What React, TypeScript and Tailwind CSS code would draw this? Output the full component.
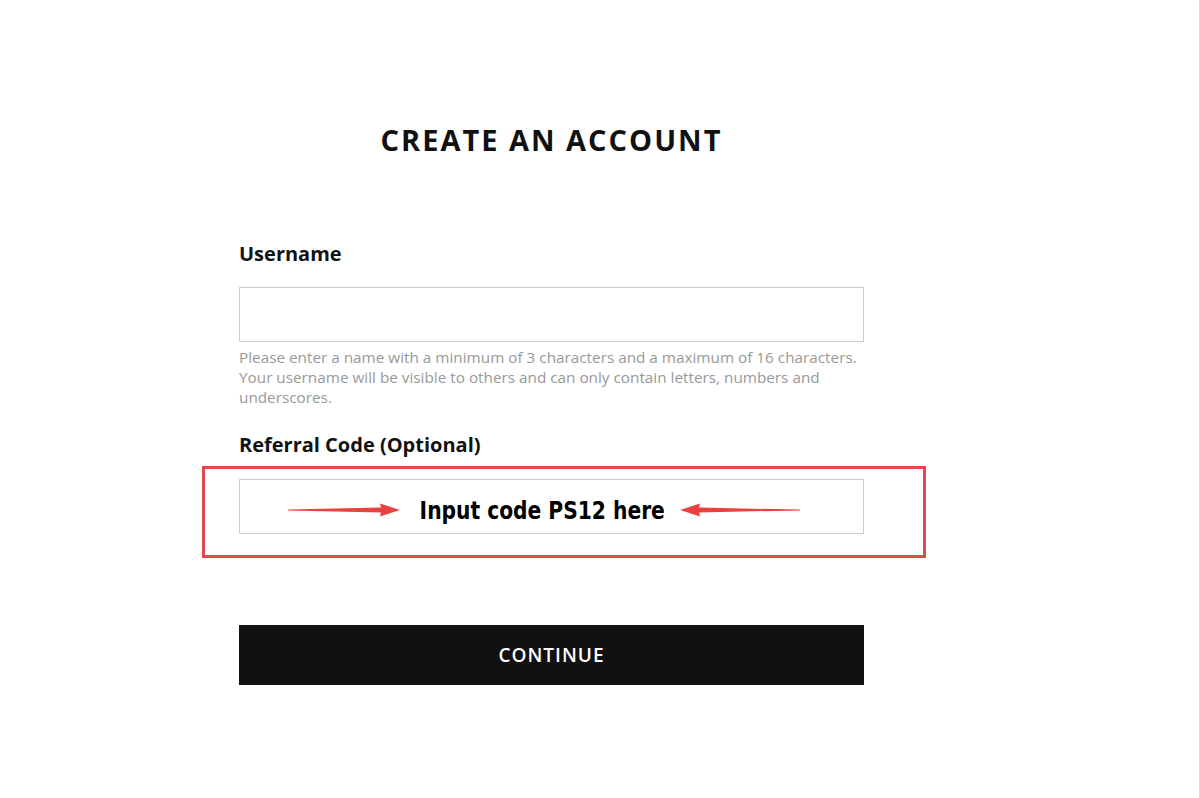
import React from 'react';

// Tapered red arrow used in the annotation
function Arrow({ dir, width }: { dir: 'right' | 'left'; width: number }) {
  const h = width - 20;
  return (
    <svg width={width} height="14" viewBox={`0 0 ${width} 14`} className={dir === 'left' ? 'rotate-180' : ''}>
      <path d={`M0 6.6 L${h + 1} 4.6 L${h} 0.5 L${width} 7 L${h} 13.5 L${h + 1} 9.4 L0 7.4 Z`} fill="#e8413f" />
    </svg>
  );
}

export default function App() {
  return (
    <div className="min-h-[798px] w-[1200px] bg-white border-r border-[#d9d9d9] font-['Open_Sans',sans-serif]">
      <div className="pl-[239px] pt-[120px]">
        <div className="w-[625px] flex flex-col">
          <h1 className="text-center text-[29px] leading-[40px] font-bold tracking-[2px] text-[#111]">
            CREATE AN ACCOUNT
          </h1>

          <label className="mt-[81px] text-[20px] leading-[26px] font-bold text-[#111]">Username</label>
          <input className="mt-[20px] h-[55px] border border-[#cccccc] outline-none px-3" />
          <p className="mt-[5px] text-[15.3px] leading-[20px] text-[#999999]">
            Please enter a name with a minimum of 3 characters and a maximum of 16 characters. Your username will be visible to others and can only contain letters, numbers and underscores.
          </p>

          <label className="mt-[25px] text-[20px] leading-[26px] font-bold text-[#111]">Referral Code (Optional)</label>
          <div className="mt-[8px] -ml-[37px] -mr-[62px] border-[3px] border-[#e04a4a] pt-[10px] pb-[21px] pl-[34px] pr-[59px]">
            <div className="h-[55px] border border-[#cccccc] flex items-center">
              <div className="ml-[48px] mt-[6px]"><Arrow dir="right" width={112} /></div>
              <span className="ml-[6px] mt-[8px] inline-block scale-x-90 text-[25px] font-black text-black font-['DejaVu_Sans_Condensed','DejaVu_Sans',sans-serif]">
                Input code PS12 here
              </span>
              <div className="ml-[2px] mt-[6px]"><Arrow dir="left" width={120} /></div>
            </div>
          </div>

          <button className="mt-[67px] h-[60px] bg-[#111111] text-white text-[19px] font-semibold tracking-[1px]">
            CONTINUE
          </button>
        </div>
      </div>
    </div>
  );
}
